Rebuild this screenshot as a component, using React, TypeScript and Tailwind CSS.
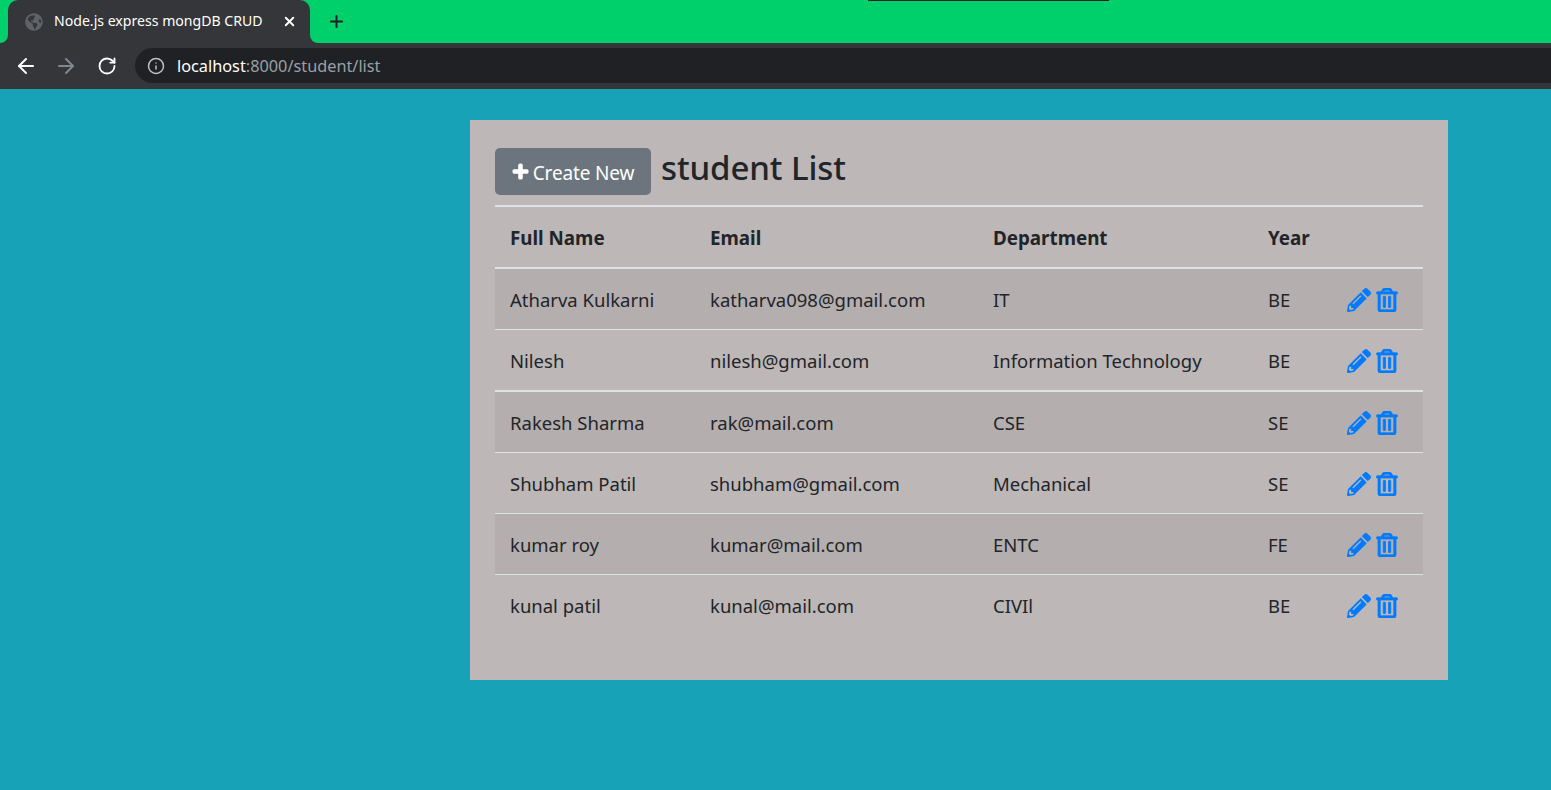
import { FaGlobeAmericas, FaPencilAlt, FaPlus, FaRegTrashAlt } from 'react-icons/fa'
import { ArrowLeft, ArrowRight, Info, Plus, RotateCw, X } from 'lucide-react'

const students = [
  { name: 'Atharva Kulkarni', email: 'katharva098@gmail.com', department: 'IT', year: 'BE' },
  { name: 'Nilesh', email: 'nilesh@gmail.com', department: 'Information Technology', year: 'BE' },
  { name: 'Rakesh Sharma', email: 'rak@mail.com', department: 'CSE', year: 'SE' },
  { name: 'Shubham Patil', email: 'shubham@gmail.com', department: 'Mechanical', year: 'SE' },
  { name: 'kumar roy', email: 'kumar@mail.com', department: 'ENTC', year: 'FE' },
  { name: 'kunal patil', email: 'kunal@mail.com', department: 'CIVIl', year: 'BE' },
]

function BrowserBar() {
  return (
    <div className="font-['Noto_Sans',sans-serif]">
      {/* Tab strip */}
      <div className="relative flex h-[43px] items-end bg-[#00d06b] pl-[8px]">
        <div className="absolute left-[868px] top-0 h-px w-[241px] bg-[#202124]" />
        <div className="relative flex h-[43px] w-[302px] items-center rounded-t-[10px] bg-[#35363a] pl-[17px] pr-[13px]">
          {/* flared tab corners */}
          <div className="absolute bottom-0 left-[-8px] h-[8px] w-[8px] bg-[#35363a]">
            <div className="h-full w-full rounded-br-[8px] bg-[#00d06b]" />
          </div>
          <div className="absolute bottom-0 right-[-8px] h-[8px] w-[8px] bg-[#35363a]">
            <div className="h-full w-full rounded-bl-[8px] bg-[#00d06b]" />
          </div>
          <FaGlobeAmericas size={18} className="text-[#5f6368]" />
          <span className="mb-[2px] ml-[11px] flex-1 text-[14.1px] text-white">Node.js express mongDB CRUD</span>
          <X size={15} strokeWidth={3} className="text-white" />
        </div>
        <Plus size={19} strokeWidth={2.5} className="mb-[12px] ml-[17px] text-[#202124]" />
      </div>
      {/* Toolbar */}
      <div className="flex h-[46px] items-center bg-[#35363a] pb-[1px] pl-[14px]">
        <ArrowLeft size={24} strokeWidth={2} className="text-white" />
        <ArrowRight size={24} strokeWidth={2} className="ml-[16px] text-[#80868b]" />
        <RotateCw size={20} strokeWidth={2.2} className="ml-[19px] text-white" />
        <div className="ml-[18px] flex h-[35px] flex-1 items-center rounded-l-full bg-[#202124] pl-[12px]">
          <Info size={18} strokeWidth={2} className="text-[#bdc1c6]" />
          <span className="ml-[12px] pt-[1px] text-[16.3px] text-white">
            localhost<span className="text-[#9aa0a6]">:8000/student/list</span>
          </span>
        </div>
      </div>
    </div>
  )
}

export default function App() {
  return (
    <div className="h-[790px] w-[1551px] overflow-hidden bg-[#17a2b8] font-['Noto_Sans',sans-serif]">
      <BrowserBar />
      <div className="ml-[470px] mt-[31px] h-[560px] w-[978px] bg-[#bdb7b7] px-[25px] pt-[28px] text-[#212529]">
        <div className="flex h-[47px] items-center">
          <button className="flex h-[47px] w-[156px] items-center justify-center rounded-[5px] bg-[#6c757d] text-[19px] tracking-[-0.15px] text-white">
            <FaPlus size={17} stroke="currentColor" strokeWidth={40} className="mr-[4px]" />
            <span className="pt-[3px]">Create New</span>
          </button>
          <h2 className="mb-[8px] ml-[10px] text-[33px] font-medium leading-none tracking-[-0.1px]">student List</h2>
        </div>
        <table className="mt-[10px] w-[928px] table-fixed border-collapse text-[18.5px]">
          <colgroup>
            <col className="w-[200px]" />
            <col className="w-[283px]" />
            <col className="w-[275px]" />
            <col className="w-[79px]" />
            <col />
          </colgroup>
          <thead>
            <tr className="h-[62px] border-y-2 border-[#dee2e6] text-[18.8px]">
              <th className="px-[15px] pt-[2px] text-left font-bold">Full Name</th>
              <th className="px-[15px] pt-[2px] text-left font-bold">Email</th>
              <th className="px-[15px] pt-[2px] text-left font-bold">Department</th>
              <th className="px-[15px] pt-[2px] text-left font-bold">Year</th>
              <th />
            </tr>
          </thead>
          <tbody>
            {students.map((s, i) => (
              <tr
                key={s.email}
                className={`border-[#dee2e6] last:border-b-0 ${i === 1 ? 'h-[62px] border-b-2' : 'h-[61px] border-b'} ${i % 2 === 0 ? 'bg-[#b5aeae]' : ''}`}
              >
                <td className="px-[15px] pt-[2px]">{s.name}</td>
                <td className="px-[15px] pt-[2px]">{s.email}</td>
                <td className="px-[15px] pt-[2px]">{s.department}</td>
                <td className="px-[15px] pt-[2px]">{s.year}</td>
                <td className="pl-[15px] pt-[3px]">
                  <div className="flex items-center gap-[4px] text-[#007bff]">
                    <FaPencilAlt size={24} />
                    <FaRegTrashAlt size={24} stroke="currentColor" strokeWidth={16} />
                  </div>
                </td>
              </tr>
            ))}
          </tbody>
        </table>
      </div>
    </div>
  )
}
